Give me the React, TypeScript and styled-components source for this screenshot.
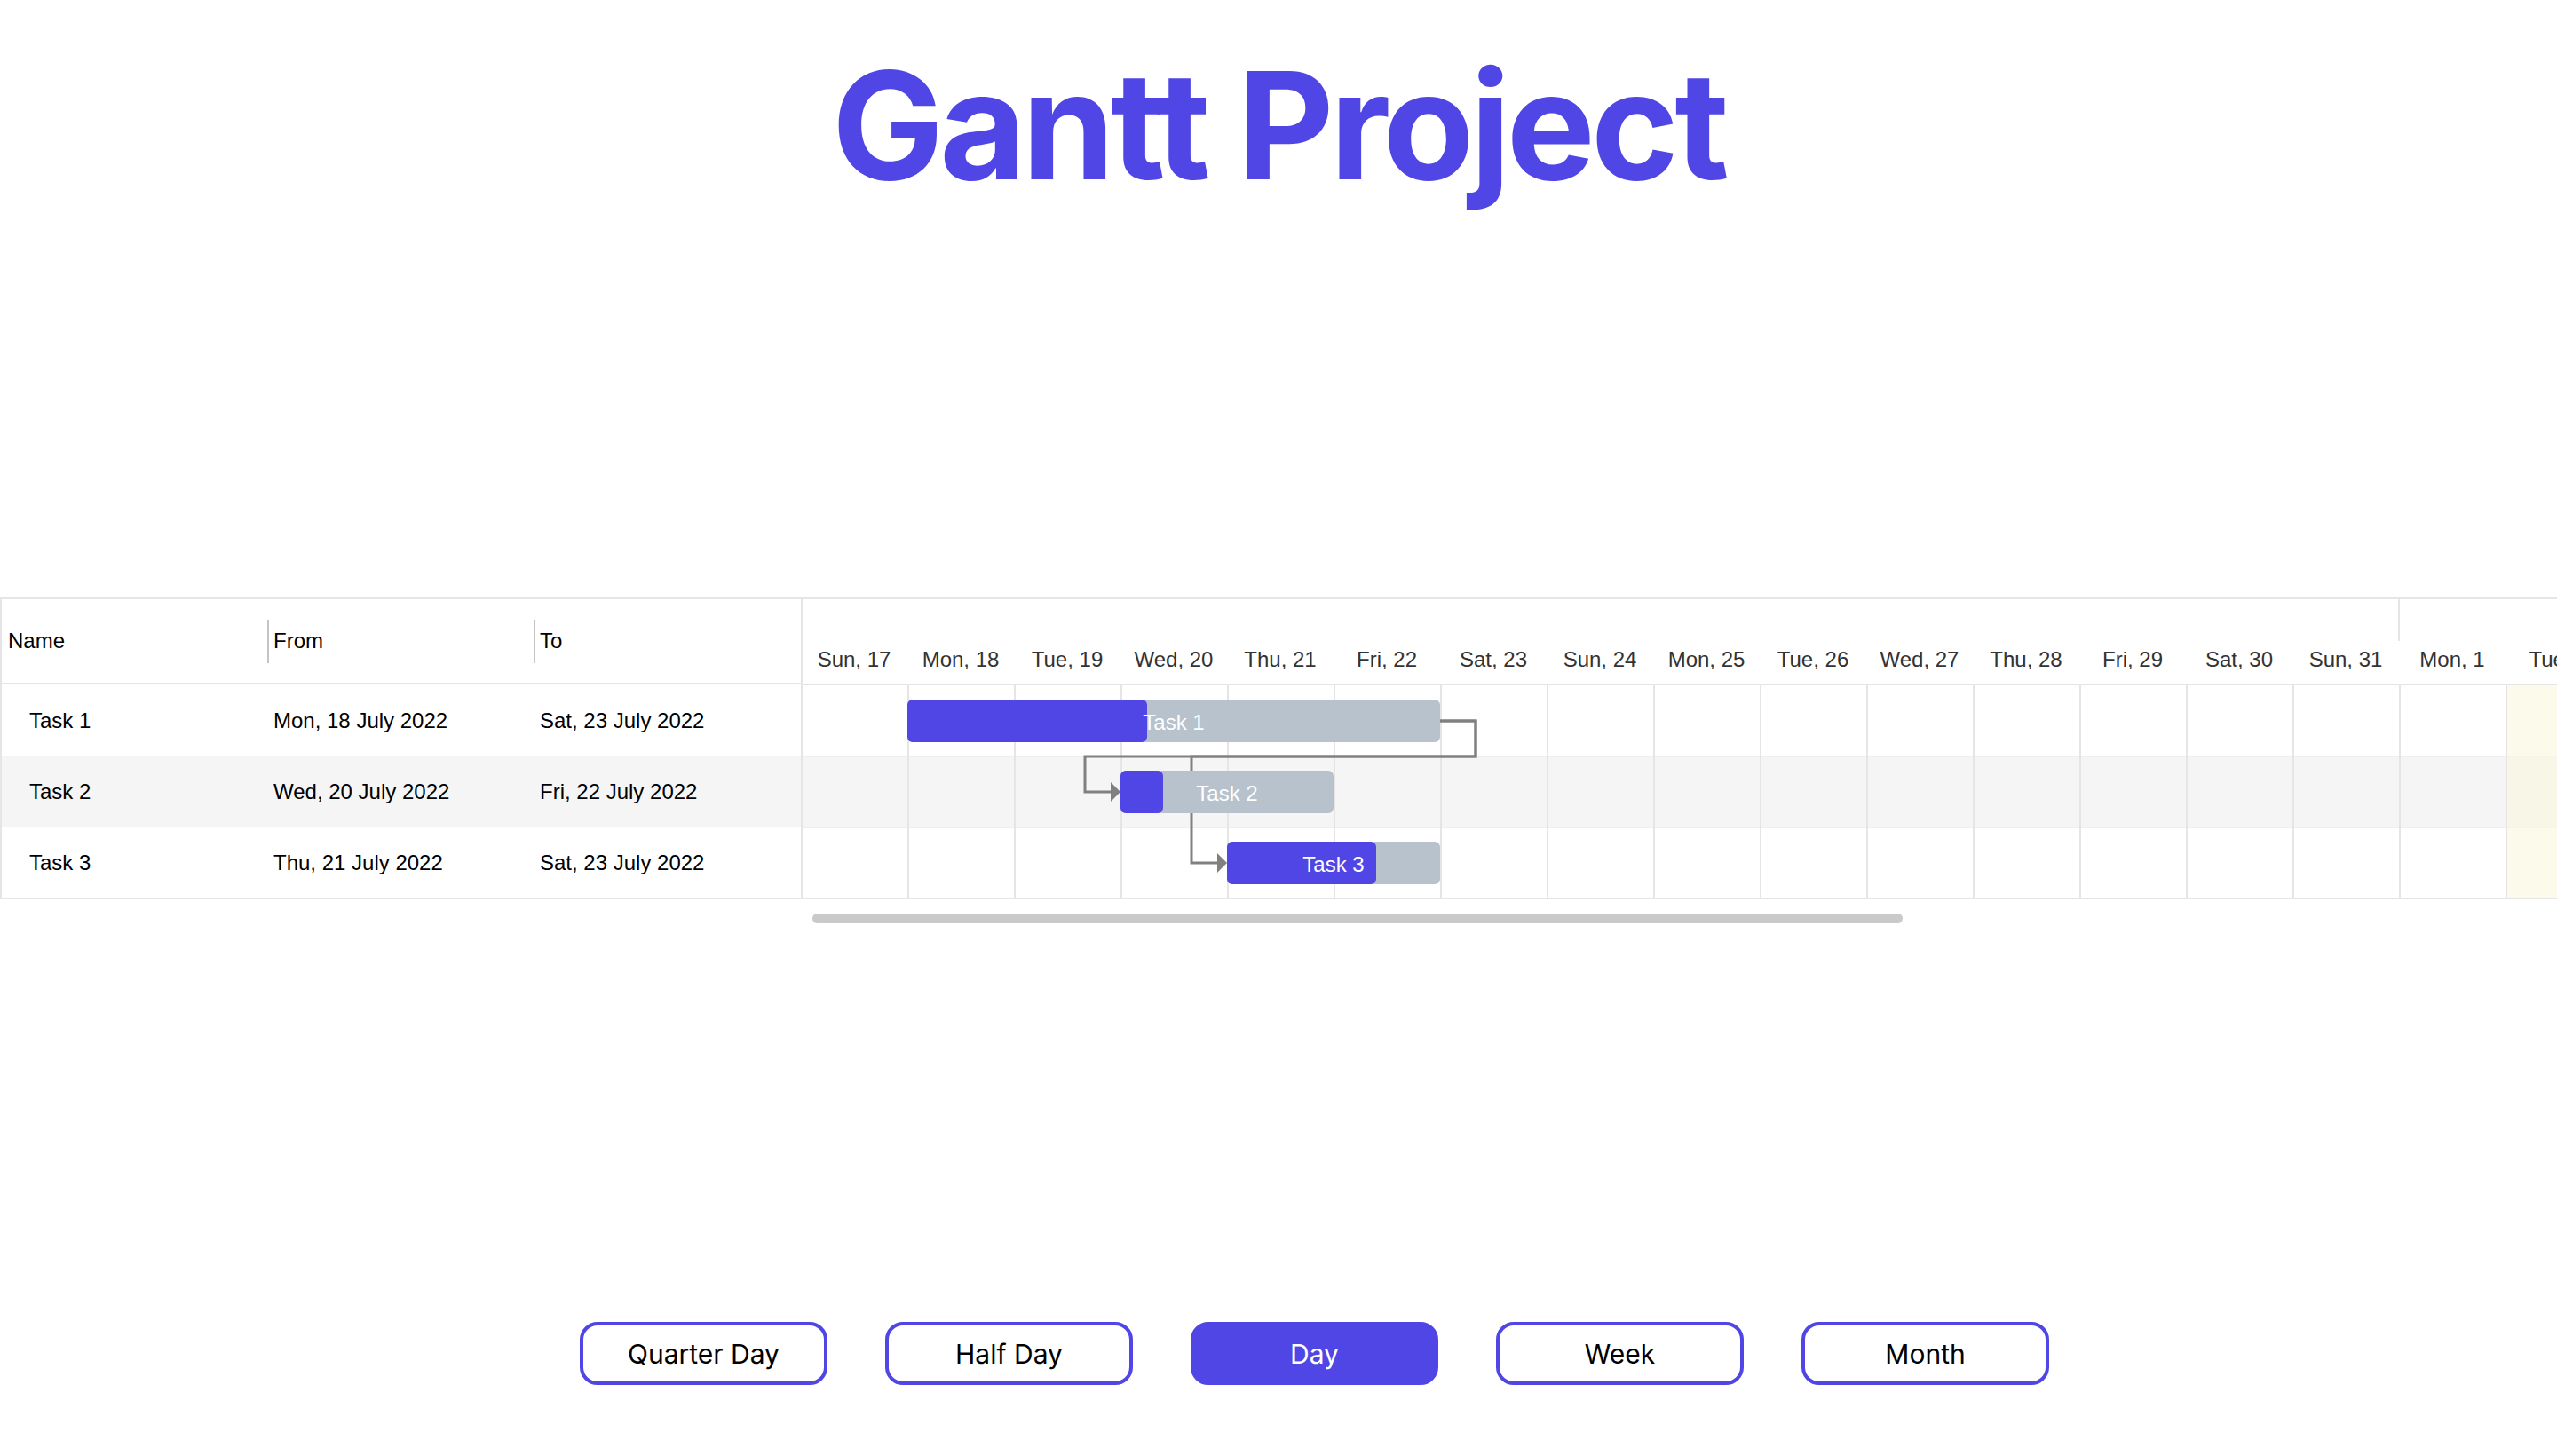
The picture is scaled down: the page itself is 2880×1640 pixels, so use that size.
import React from 'react';
import styled, { createGlobalStyle } from 'styled-components';

const GlobalStyle = createGlobalStyle`
  html, body {
    margin: 0;
    padding: 0;
    background: #ffffff;
  }
  body {
    font-family: "Liberation Sans", Arial, sans-serif;
  }
`;

const INDIGO = '#4f46e5';
const COL_W = 120;
const ROW_H = 80;
const HEAD_H = 98;
const CHART_W = 1978;

const Page = styled.div`
  width: 2880px;
  height: 1640px;
  display: flex;
  flex-direction: column;
  overflow: hidden;
`;

const Title = styled.h1`
  margin: 57px 0 0;
  font-family: Inter, "Noto Sans", sans-serif;
  font-weight: 700;
  font-size: 168px;
  line-height: 1;
  letter-spacing: -0.028em;
  color: ${INDIGO};
  text-align: center;
`;

const GanttWrap = styled.div`
  margin-top: 448px;
  display: flex;
  width: 2880px;
`;

const TaskList = styled.div`
  width: 902px;
  flex-shrink: 0;
  display: flex;
  flex-direction: column;
  border-left: 2px solid #e6e4e4;
  box-sizing: border-box;
  font-size: 24px;
  color: #000;
`;

const ListHeader = styled.div`
  height: ${HEAD_H}px;
  box-sizing: border-box;
  border-top: 2px solid #e6e4e4;
  border-bottom: 2px solid #e6e4e4;
  display: grid;
  grid-template-columns: 299px 300px 301px;
`;

const HeaderCell = styled.div<{ $pad: number }>`
  display: flex;
  align-items: center;
  padding-left: ${(p) => p.$pad}px;
`;

const Separator = styled.span`
  width: 2px;
  height: 49px;
  background: #c4c4c4;
  margin-right: 5px;
`;

const ListRow = styled.div<{ $alt: boolean }>`
  height: ${ROW_H}px;
  box-sizing: border-box;
  padding-top: 2px;
  display: grid;
  grid-template-columns: 299px 300px 301px;
  align-items: center;
  background: ${(p) => (p.$alt ? '#f5f5f5' : '#ffffff')};
`;

const ListBottom = styled.div`
  height: 2px;
  background: #e6e4e4;
`;

const RowCell = styled.div<{ $pad: number }>`
  padding-left: ${(p) => p.$pad}px;
  white-space: nowrap;
`;

const ChartArea = styled.div`
  width: ${CHART_W}px;
  overflow: hidden;
  flex-shrink: 0;
`;

const ScrollTrack = styled.div`
  height: 11px;
  margin-top: 16px;
  padding-left: 915px;
`;

const ScrollThumb = styled.div`
  width: 1228px;
  height: 11px;
  border-radius: 6px;
  background: #cacaca;
`;

const ButtonRow = styled.div`
  margin-top: 449px;
  display: flex;
  justify-content: center;
  gap: 65px;
  padding-left: 81px;
`;

const ViewButton = styled.button<{ $active: boolean }>`
  width: 279px;
  height: 71px;
  box-sizing: border-box;
  border: 4px solid ${INDIGO};
  border-radius: 20px;
  background: ${(p) => (p.$active ? INDIGO : '#ffffff')};
  color: ${(p) => (p.$active ? '#ffffff' : '#000000')};
  font-family: Inter, "Noto Sans", sans-serif;
  font-size: 30px;
  padding: 0;
  cursor: pointer;
`;

const tasks = [
  { name: 'Task 1', from: 'Mon, 18 July 2022', to: 'Sat, 23 July 2022', start: 1, days: 5, progress: 0.45 },
  { name: 'Task 2', from: 'Wed, 20 July 2022', to: 'Fri, 22 July 2022', start: 3, days: 2, progress: 0.2 },
  { name: 'Task 3', from: 'Thu, 21 July 2022', to: 'Sat, 23 July 2022', start: 4, days: 2, progress: 0.7 },
];

const dayNames = ['Sun', 'Mon', 'Tue', 'Wed', 'Thu', 'Fri', 'Sat'];
const days = Array.from({ length: 17 }, (_, i) => {
  const d = new Date(2022, 6, 17 + i);
  return `${dayNames[d.getDay()]}, ${d.getDate()}`;
});

const views = ['Quarter Day', 'Half Day', 'Day', 'Week', 'Month'];

function Chart() {
  const bodyTop = HEAD_H + 1;
  const bodyH = tasks.length * ROW_H;
  const barY = (i: number) => bodyTop + i * ROW_H + 16;
  const midY = (i: number) => barY(i) + 24;
  const t1End = (tasks[0].start + tasks[0].days) * COL_W;

  return (
    <svg width={CHART_W} height={bodyTop + bodyH + 1} style={{ display: 'block' }}>
      {/* rows */}
      {tasks.map((t, i) => (
        <rect
          key={t.name}
          x={0}
          y={bodyTop + i * ROW_H}
          width={CHART_W}
          height={ROW_H}
          fill={i % 2 === 1 ? '#f5f5f5' : '#ffffff'}
        />
      ))}
      {tasks.map((t, i) => (
        <line
          key={`rl-${t.name}`}
          x1={0}
          x2={CHART_W}
          y1={bodyTop + (i + 1) * ROW_H}
          y2={bodyTop + (i + 1) * ROW_H}
          stroke={i === tasks.length - 1 ? '#e6e4e4' : '#ebeff2'}
          strokeWidth={2}
        />
      ))}
      {/* today */}
      <rect x={16 * COL_W} y={bodyTop} width={COL_W} height={bodyH} fill="rgba(250, 248, 222, 0.6)" />
      {/* ticks */}
      {Array.from({ length: 18 }, (_, i) => (
        <line
          key={`tk-${i}`}
          x1={i * COL_W + 1}
          x2={i * COL_W + 1}
          y1={bodyTop}
          y2={bodyTop + bodyH}
          stroke="#e6e4e4"
          strokeWidth={2}
        />
      ))}

      {/* calendar header */}
      <rect x={0} y={0} width={CHART_W} height={HEAD_H} fill="#ffffff" />
      <line x1={0} x2={CHART_W} y1={1} y2={1} stroke="#e6e4e4" strokeWidth={2} />
      <line x1={0} x2={CHART_W} y1={HEAD_H} y2={HEAD_H} stroke="#e6e4e4" strokeWidth={2} />
      <line x1={1} x2={1} y1={0} y2={HEAD_H} stroke="#e6e4e4" strokeWidth={2} />
      <line x1={15 * COL_W} x2={15 * COL_W} y1={0} y2={49} stroke="#e6e4e4" strokeWidth={2} />
      {days.map((d, i) => (
        <text
          key={d}
          x={i * COL_W + COL_W / 2}
          y={78}
          textAnchor="middle"
          fontFamily='"Liberation Sans", Arial, sans-serif'
          fontSize={24}
          fill="#333"
        >
          {d}
        </text>
      ))}

      {/* dependency arrows */}
      <g fill="none" stroke="#808080" strokeWidth={3}>
        <path d={`M ${t1End} ${midY(0)} h 40 v 40 H ${tasks[1].start * COL_W - 40} V ${midY(1)} h 30`} />
        <path d={`M ${t1End} ${midY(0)} h 40 v 40 H ${tasks[2].start * COL_W - 40} V ${midY(2)} h 30`} />
      </g>
      {[1, 2].map((i) => {
        const x = tasks[i].start * COL_W;
        const y = midY(i);
        return <polygon key={`ah-${i}`} points={`${x},${y} ${x - 11},${y - 11} ${x - 11},${y + 11}`} fill="#808080" />;
      })}

      {/* bars */}
      {tasks.map((t, i) => {
        const x = t.start * COL_W;
        const w = t.days * COL_W;
        return (
          <g key={`bar-${t.name}`}>
            <rect x={x} y={barY(i)} width={w} height={48} rx={6} fill="#b8c2cc" />
            <rect x={x} y={barY(i)} width={w * t.progress} height={48} rx={6} fill={INDIGO} />
            <text
              x={x + w / 2}
              y={midY(i) + 1}
              textAnchor="middle"
              dominantBaseline="central"
              fontFamily='"Liberation Sans", Arial, sans-serif'
              fontSize={24}
              fill="#ffffff"
            >
              {t.name}
            </text>
          </g>
        );
      })}
    </svg>
  );
}

export default function App() {
  return (
    <Page>
      <GlobalStyle />
      <Title>Gantt Project</Title>
      <GanttWrap>
        <TaskList>
          <ListHeader>
            <HeaderCell $pad={7}>Name</HeaderCell>
            <HeaderCell $pad={0}>
              <Separator />
              From
            </HeaderCell>
            <HeaderCell $pad={0}>
              <Separator />
              To
            </HeaderCell>
          </ListHeader>
          {tasks.map((t, i) => (
            <ListRow key={t.name} $alt={i % 2 === 1}>
              <RowCell $pad={31}>{t.name}</RowCell>
              <RowCell $pad={7}>{t.from}</RowCell>
              <RowCell $pad={7}>{t.to}</RowCell>
            </ListRow>
          ))}
          <ListBottom />
        </TaskList>
        <ChartArea>
          <Chart />
        </ChartArea>
      </GanttWrap>
      <ScrollTrack>
        <ScrollThumb />
      </ScrollTrack>
      <ButtonRow>
        {views.map((v) => (
          <ViewButton key={v} $active={v === 'Day'}>
            {v}
          </ViewButton>
        ))}
      </ButtonRow>
    </Page>
  );
}
